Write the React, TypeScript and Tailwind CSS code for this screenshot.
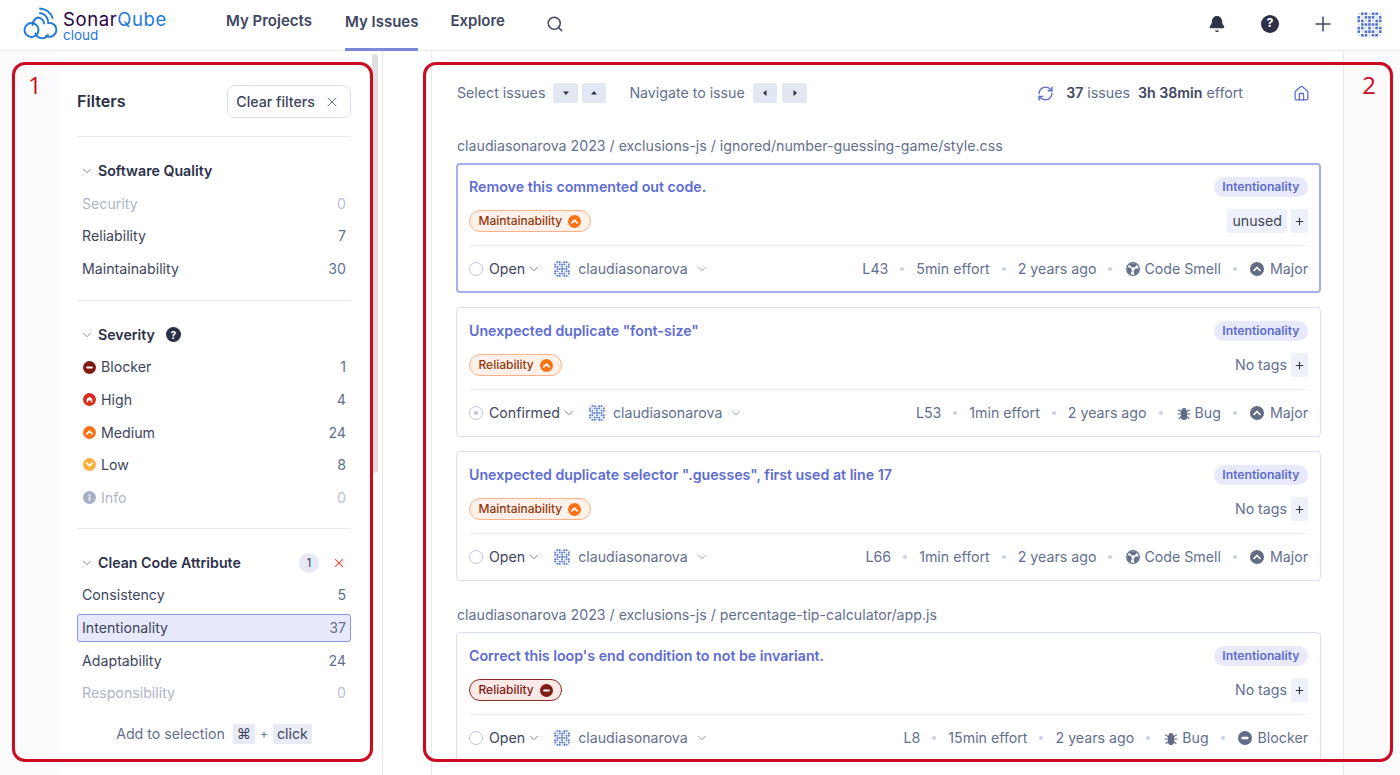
import React from 'react';
import { Bell, ChevronDown, House, Plus, RefreshCw, Search, X } from 'lucide-react';

const AVATAR_ROWS = ['0110110', '1011101', '1101011', '0111110', '1101011', '1011101', '0110110'];

function Avatar({ size }: { size: number }) {
  return (
    <svg width={size} height={size} viewBox="0 0 28 28" className="shrink-0">
      {AVATAR_ROWS.map((row, y) =>
        row.split('').map((c, x) =>
          c === '1' ? <rect key={`${x}-${y}`} x={x * 4 + 0.5} y={y * 4 + 0.5} width="3" height="3" fill="#5577c9" /> : <rect key={`${x}-${y}`} x={x * 4 + 1} y={y * 4 + 1} width="2" height="2" fill="#c3d0ee" />
        )
      )}
    </svg>
  );
}

function Logo() {
  return (
    <svg width="38" height="38" viewBox="0 0 38 38" fill="none" stroke="#1e78d8" strokeWidth="1.900" strokeLinecap="round" className="shrink-0">
      <circle cx="9.500" cy="24" r="7" />
      <path d="M13.500 27.500A7 7 0 0 0 26 29" />
      <path d="M24 30A7 7 0 1 0 26 17" />
      <path d="M10.500 19A8.500 8.500 0 0 1 16 11.500a6.500 6.500 0 0 1 6 6" />
      <path d="M18 7A9 9 0 0 1 26 15" />
      <path d="M18 2.500A14 14 0 0 1 30.500 12" />
    </svg>
  );
}

type Level = 'blocker' | 'high' | 'medium' | 'low' | 'info' | 'major' | 'blockerGrey';

const LEVEL_FILL: Record<Level, string> = {
  blocker: '#801b14',
  high: '#d92d20',
  medium: '#f97316',
  low: '#fbb03b',
  info: '#a8b0c8',
  major: '#636d88',
  blockerGrey: '#636d88',
};

function LevelIcon({ level, size = 14 }: { level: Level; size?: number }) {
  return (
    <svg width={size} height={size} viewBox="0 0 14 14" className="shrink-0">
      <circle cx="7" cy="7" r="7" fill={LEVEL_FILL[level]} />
      {(level === 'blocker' || level === 'blockerGrey') && <rect x="3.500" y="5.800" width="7" height="2.400" rx="0.800" fill="#fff" />}
      {level === 'high' && <path d="M4 10V6.500L7 4l3 2.500V10H8.500V8h-3v2z" fill="#fff" />}
      {(level === 'medium' || level === 'major') && <path d="M4 8.500 7 5.500l3 3" fill="none" stroke="#fff" strokeWidth="1.700" strokeLinecap="round" strokeLinejoin="round" />}
      {level === 'low' && <path d="M4 5.500 7 8.500l3-3" fill="none" stroke="#fff" strokeWidth="1.700" strokeLinecap="round" strokeLinejoin="round" />}
      {level === 'info' && (
        <>
          <circle cx="7" cy="4.200" r="1" fill="#fff" />
          <rect x="6.100" y="6" width="1.800" height="4.500" rx="0.500" fill="#fff" />
        </>
      )}
    </svg>
  );
}

function HelpDot({ size }: { size: number }) {
  return (
    <span
      style={{ width: size, height: size, fontSize: size * 0.68 }}
      className="flex shrink-0 items-center justify-center rounded-full bg-[#2d3148] font-bold leading-none text-white"
    >
      ?
    </span>
  );
}

function CodeSmellIcon() {
  return (
    <svg width="14" height="14" viewBox="0 0 14 14" fill="none" stroke="#636d88" className="shrink-0">
      <circle cx="7" cy="7" r="6.300" strokeWidth="1.300" />
      <circle cx="7" cy="7" r="3.800" strokeWidth="4" strokeDasharray="5.400 2.560" transform="rotate(-130 7 7)" />
    </svg>
  );
}

function BugIcon() {
  return (
    <svg width="14" height="14" viewBox="0 0 14 14" fill="none" stroke="#636d88" strokeWidth="1.200" strokeLinecap="round" className="shrink-0">
      <path d="M4.500 5.500h5V11a2.500 2.500 0 0 1-5 0z" fill="#636d88" />
      <path d="M5 4.500a2 2 0 0 1 4 0z" fill="#636d88" />
      <path d="M1.500 4l3 1.800M12.500 4l-3 1.800M1 8h3.500M13 8H9.500M2 12.500l2.500-2M12 12.500l-2.500-2" />
    </svg>
  );
}

function Dot() {
  return <span className="h-[4px] w-[4px] shrink-0 rounded-full bg-[#c9d2e3]" />;
}

function FacetHeader({ title, extra }: { title: string; extra?: React.ReactNode }) {
  return (
    <div className="flex h-[32px] items-center pl-[3px]">
      <ChevronDown size={14} strokeWidth={1.3} className="mr-[4px] text-[#5c6680]" />
      <span className="text-[14.200px] font-semibold text-[#2d3148]">{title}</span>
      {extra}
    </div>
  );
}

function FacetRow({ label, count, muted, selected, icon }: { label: string; count: number; muted?: boolean; selected?: boolean; icon?: Level }) {
  const box = selected ? 'border border-[#8b97e6] bg-[#e8eafb] rounded-[3px]' : 'border border-transparent';
  const text = muted ? 'text-[#aeb5cb]' : 'text-[#3e4560]';
  return (
    <div className="flex h-[32.600px] items-center">
      <div className={`flex h-[28px] w-full items-center justify-between px-[4px] text-[14.200px] ${box}`}>
        <span className={`flex items-center gap-[5px] ${text}`}>
          {icon && <span className="ml-[1px]"><LevelIcon level={icon} size={13} /></span>}
          {label}
        </span>
        <span className={muted ? 'text-[#b8bfd3]' : 'text-[#626f90]'}>{count}</span>
      </div>
    </div>
  );
}

function Key({ children }: { children: React.ReactNode }) {
  return <span className="flex h-[20px] items-center rounded-[2px] bg-[#e8eaf5] px-[4px] text-[#3e4560]">{children}</span>;
}

function Filters() {
  return (
    <div className="w-[312px] shrink-0 pl-[17px] pr-[21px]">
      <div className="flex h-[86px] items-center justify-between border-b border-[#e6e9f2] pt-[34px] pb-[18px]">
        <span className="text-[16.200px] font-semibold text-[#2d3148]">Filters</span>
        <button className="flex h-[33px] items-center gap-[9px] rounded-[8px] border border-[#d9def0] pl-[8px] pr-[10px] text-[14.200px] font-medium text-[#3e4560]">
          Clear filters
          <X size={16} strokeWidth={1.4} className="text-[#5c6680]" />
        </button>
      </div>
      <div className="border-b border-[#e6e9f2] pt-[18px] pb-[15px]">
        <FacetHeader title="Software Quality" />
        <FacetRow label="Security" count={0} muted />
        <FacetRow label="Reliability" count={7} />
        <FacetRow label="Maintainability" count={30} />
      </div>
      <div className="border-b border-[#e6e9f2] pt-[18px] pb-[14px]">
        <FacetHeader title="Severity" extra={<span className="ml-[11px]"><HelpDot size={15} /></span>} />
        <FacetRow label="Blocker" count={1} icon="blocker" />
        <FacetRow label="High" count={4} icon="high" />
        <FacetRow label="Medium" count={24} icon="medium" />
        <FacetRow label="Low" count={8} icon="low" />
        <FacetRow label="Info" count={0} muted icon="info" />
      </div>
      <div className="pt-[18px]">
        <FacetHeader
          title="Clean Code Attribute"
          extra={
            <span className="ml-auto flex items-center gap-[13px] pr-[5px]">
              <span className="flex h-[20px] w-[20px] items-center justify-center rounded-full bg-[#e6e9f5] text-[12px] text-[#3e4560]">1</span>
              <X size={14} strokeWidth={1.8} className="text-[#e0301e]" />
            </span>
          }
        />
        <FacetRow label="Consistency" count={5} />
        <FacetRow label="Intentionality" count={37} selected />
        <FacetRow label="Adaptability" count={24} />
        <FacetRow label="Responsibility" count={0} muted />
      </div>
      <div className="mt-[14px] flex items-center justify-center gap-[5px] text-[14.200px] text-[#626f90]">
        <span className="mr-[3px]">Add to selection</span>
        <Key>⌘</Key>
        <span className="text-[12px]">+</span>
        <Key>click</Key>
      </div>
    </div>
  );
}

type Issue = {
  title: string;
  quality: string;
  level: 'medium' | 'blocker';
  tag?: string;
  status: string;
  line: string;
  effort: string;
  type: 'Code Smell' | 'Bug';
  severity: 'Major' | 'Blocker';
  selected?: boolean;
};

function IssueCard({ issue }: { issue: Issue }) {
  const pill =
    issue.level === 'blocker'
      ? 'border-[#8f2a22] bg-[#fbe9e7] text-[#801b14]'
      : 'border-[#fdb088] bg-[#fff1ea] text-[#93370d]';
  const border = issue.selected ? 'border-2 border-[#a5aeea] px-[11px]' : 'border border-[#d9def0] px-[12px]';
  return (
    <div className={`h-[130px] rounded-[4px] bg-white ${border}`}>
      <div className={`flex items-start justify-between ${issue.selected ? 'pt-[12px]' : 'pt-[13px]'}`}>
        <span className="text-[14.200px] font-semibold leading-[20px] text-[#5d6cd0]">{issue.title}</span>
        <span className="flex h-[20px] items-center rounded-full bg-[#e8eafb] px-[8.500px] text-[12.200px] font-semibold text-[#5d6cd0]">Intentionality</span>
      </div>
      <div className="mt-[12px] flex h-[24px] items-center justify-between">
        <span className={`flex h-[22px] items-center gap-[6px] rounded-full border px-[8.500px] text-[12px] font-medium ${pill}`}>
          {issue.quality}
          <LevelIcon level={issue.level} size={13} />
        </span>
        <span className="flex items-center gap-[4px] text-[14.200px]">
          {issue.tag ? (
            <span className="flex h-[24px] items-center rounded-[2px] bg-[#eff1fa] px-[5px] text-[#3e4560]">{issue.tag}</span>
          ) : (
            <span className="text-[#626f90]">No tags</span>
          )}
          <span className="flex h-[24px] w-[17px] items-center justify-center rounded-[2px] bg-[#eff1fa] text-[#2d3148]">
            <Plus size={11} strokeWidth={2.4} />
          </span>
        </span>
      </div>
      <div className="mt-[12px] flex h-[47px] items-center justify-between border-t border-[#e8eaf6] text-[14.200px]">
        <span className="flex items-center">
          <span className="mr-[6px] flex h-[14px] w-[14px] items-center justify-center rounded-full border border-[#bcc5dc]">
            {issue.status === 'Confirmed' && <span className="h-[4px] w-[4px] rounded-full bg-[#bcc5dc]" />}
          </span>
          <span className="text-[#3e4560]">{issue.status}</span>
          <ChevronDown size={14} strokeWidth={1.3} className="ml-[2px] text-[#4e5873]" />
          <span className="ml-[13px] mr-[8px]"><Avatar size={16} /></span>
          <span className="text-[#626f90]">claudiasonarova</span>
          <ChevronDown size={14} strokeWidth={1.3} className="ml-[7px] text-[#6f7a96]" />
        </span>
        <span className="flex items-center gap-[12px] text-[#626f90]">
          <span>{issue.line}</span>
          <Dot />
          <span>{issue.effort}</span>
          <Dot />
          <span>2 years ago</span>
          <Dot />
          <span className="ml-[2px] flex items-center gap-[4px]">
            {issue.type === 'Bug' ? <BugIcon /> : <CodeSmellIcon />}
            {issue.type}
          </span>
          <Dot />
          <span className="ml-[1px] flex items-center gap-[6px]">
            <LevelIcon level={issue.severity === 'Major' ? 'major' : 'blockerGrey'} />
            {issue.severity}
          </span>
        </span>
      </div>
    </div>
  );
}

function Arrow({ d }: { d: string }) {
  return (
    <span className="flex h-[20px] w-[24.500px] items-center justify-center rounded-[2px] bg-[#e3e6f3]">
      <svg width="10" height="10" viewBox="0 0 10 10"><path d={d} fill="#2d3148" /></svg>
    </span>
  );
}

function IssueList() {
  return (
    <main className="w-[913px] shrink-0 border-l border-r border-[#e6e9f2] bg-white pl-[24px] pr-[22px]">
      <div className="flex h-[84px] items-center pl-[1px] text-[14.200px] text-[#626f90]">
        <span className="mr-[8px]">Select issues</span>
        <span className="flex gap-[4px]"><Arrow d="M2 3.500h6L5 7z" /><Arrow d="M2 6.500h6L5 3z" /></span>
        <span className="ml-[23px] mr-[8px]">Navigate to issue</span>
        <span className="flex gap-[5px]"><Arrow d="M6.500 2v6L3 5z" /><Arrow d="M3.500 2v6L7 5z" /></span>
        <RefreshCw size={17} strokeWidth={2} className="ml-auto text-[#5d6cd0]" />
        <span className="ml-[12px] font-semibold text-[#3e4560]">37</span>
        <span className="ml-[4px]">issues</span>
        <span className="ml-[8px] font-semibold text-[#3e4560]">3h 38min</span>
        <span className="ml-[4px]">effort</span>
        <House size={17} strokeWidth={1.8} className="ml-[50px] mr-[11px] text-[#5d6cd0]" />
      </div>
      <div className="mt-[1px] pl-[1px] text-[14.200px] leading-[20px] text-[#626f90]">claudiasonarova 2023 / exclusions-js / ignored/number-guessing-game/style.css</div>
      <div className="mt-[7px] flex flex-col gap-[14px]">
        <IssueCard issue={{ title: 'Remove this commented out code.', quality: 'Maintainability', level: 'medium', tag: 'unused', status: 'Open', line: 'L43', effort: '5min effort', type: 'Code Smell', severity: 'Major', selected: true }} />
        <IssueCard issue={{ title: 'Unexpected duplicate "font-size"', quality: 'Reliability', level: 'medium', status: 'Confirmed', line: 'L53', effort: '1min effort', type: 'Bug', severity: 'Major' }} />
        <IssueCard issue={{ title: 'Unexpected duplicate selector ".guesses", first used at line 17', quality: 'Maintainability', level: 'medium', status: 'Open', line: 'L66', effort: '1min effort', type: 'Code Smell', severity: 'Major' }} />
      </div>
      <div className="mt-[24px] pl-[1px] text-[14.200px] leading-[20px] text-[#626f90]">claudiasonarova 2023 / exclusions-js / percentage-tip-calculator/app.js</div>
      <div className="mt-[7px]">
        <IssueCard issue={{ title: "Correct this loop's end condition to not be invariant.", quality: 'Reliability', level: 'blocker', status: 'Open', line: 'L8', effort: '15min effort', type: 'Bug', severity: 'Blocker' }} />
      </div>
    </main>
  );
}

export default function App() {
  return (
    <div className="relative flex h-[775px] w-[1400px] flex-col overflow-hidden bg-white font-['Inter',sans-serif]">
      <header className="flex h-[51px] shrink-0 items-center border-b border-[#eceef4] bg-white">
        <div className="ml-[22px] flex w-[204px] items-center">
          <Logo />
          <div className="ml-[3px] flex flex-col">
            <div className="flex text-[18.500px] leading-[20px] tracking-[0.6px]">
              <span className="text-[#290042]">Sonar</span>
              <span className="text-[#1e78d8]">Qube</span>
            </div>
            <div className="text-[13.500px] leading-[12px] text-[#1e78d8]">cloud</div>
          </div>
        </div>
        <nav className="flex h-full items-stretch text-[15px] font-semibold text-[#3e4560]">
          <span className="flex items-center pb-[7px]">My Projects</span>
          <span className="ml-[33px] mb-[-1px] flex items-center border-b-[3px] border-[#7b87d9] pb-[4px]">My Issues</span>
          <span className="ml-[32px] flex items-center pb-[7px]">Explore</span>
        </nav>
        <Search size={18} strokeWidth={2} className="ml-[41px] mt-[-2px] text-[#3e4560]" />
        <div className="ml-auto mr-[18px] flex items-center pb-[3px]">
          <Bell size={18} fill="#2d3148" strokeWidth={1.5} className="text-[#2d3148]" />
          <span className="ml-[35px]"><HelpDot size={18} /></span>
          <Plus size={24} strokeWidth={1.5} className="ml-[32px] text-[#3e4560]" />
          <span className="ml-[22px] mt-[2px]"><Avatar size={25} /></span>
        </div>
      </header>

      <div className="flex min-h-0 flex-1">
        <div className="w-[60px] shrink-0 bg-[#fbfbfd]" />
        <aside className="flex w-[322px] shrink-0 bg-white">
          <Filters />
          <div className="pt-[3px]">
            <div className="h-[419px] w-[6px] rounded-full bg-[#dfdfe1]" />
          </div>
        </aside>
        <div className="w-[49px] shrink-0 border-l border-[#e6e9f2] bg-white" />
        <IssueList />
        <div className="flex-1 bg-[#fbfbfd]" />
      </div>

      {/* red callouts drawn on top of the page */}
      <div className="absolute left-[12px] top-[62px] h-[700px] w-[361px] rounded-[13px] border-[3px] border-[#cc0a20]">
        <span className="absolute left-[13px] top-[4px] font-['Open_Sans',sans-serif] text-[24px] leading-[32px] text-[#cc0a20]">1</span>
      </div>
      <div className="absolute left-[423px] top-[62px] h-[700px] w-[970px] rounded-[13px] border-[3px] border-[#cc0a20]">
        <span className="absolute right-[14px] top-[4px] font-['Open_Sans',sans-serif] text-[24px] leading-[32px] text-[#cc0a20]">2</span>
      </div>
    </div>
  );
}
